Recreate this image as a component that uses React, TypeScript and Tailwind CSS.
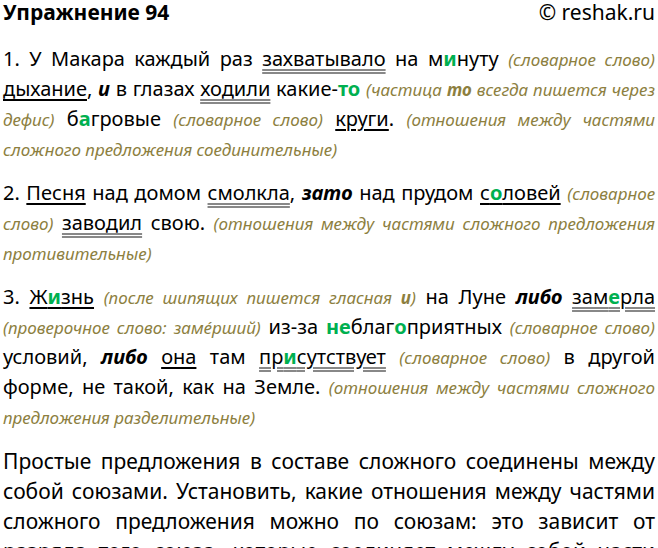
const C = ({ children }: { children: React.ReactNode }) => (
  <i className="text-[#8d7f3f] text-[17px]">{children}</i>
);
const S = ({ children }: { children: React.ReactNode }) => (
  <span className="underline decoration-black decoration-[1.5px] underline-offset-[3px]">{children}</span>
);
const P = ({ children }: { children: React.ReactNode }) => (
  <span className="underline decoration-double decoration-[#888] underline-offset-[3px]">{children}</span>
);
const G = ({ children }: { children: React.ReactNode }) => (
  <b className="text-[#00b050]">{children}</b>
);

export default function App() {
  return (
    <div className="w-[658px] h-[548px] bg-white text-black px-[3px] overflow-hidden font-['Liberation_Serif','Times_New_Roman',serif]">
      <div className="flex justify-between items-baseline text-[21px] leading-[24px]">
        <b>Упражнение 94</b>
        <span>© reshak.ru</span>
      </div>
      <p className="mt-[20px] text-[20px] leading-[29px] text-justify">
        1. У Макара каждый раз <P>захватывало</P> на м<G>и</G>нуту <C>(словарное слово)</C> <S>дыхание</S>, <b><i>и</i></b> в глазах <P>ходили</P> какие-<G>то</G> <C>(частица <b>то</b> всегда пишется через дефис)</C> б<G>а</G>гровые <C>(словарное слово)</C> <S>круги</S>. <C>(отношения между частями сложного предложения соединительные)</C>
      </p>
      <p className="mt-[14px] text-[20px] leading-[29px] text-justify">
        2. <S>Песня</S> над домом <P>смолкла</P>, <b><i>зато</i></b> над прудом <S>с<G>о</G>ловей</S> <C>(словарное слово)</C> <P>заводил</P> свою. <C>(отношения между частями сложного предложения противительные)</C>
      </p>
      <p className="mt-[14px] text-[20px] leading-[29px] text-justify">
        3. <S>Ж<G>и</G>знь</S> <C>(после шипящих пишется гласная <b>и</b>)</C> на Луне <b><i>либо</i></b> <P>зам<G>е</G>рла</P> <C>(проверочное слово: замéрший)</C> из-за <G>не</G>благ<G>о</G>приятных <C>(словарное слово)</C> условий, <b><i>либо</i></b> <S>она</S> там <P>пр<G>и</G>сутствует</P> <C>(словарное слово)</C> в другой форме, не такой, как на Земле. <C>(отношения между частями сложного предложения разделительные)</C>
      </p>
      <p className="mt-[14px] text-[21px] leading-[30px] text-justify">
        Простые предложения в составе сложного соединены между собой союзами. Установить, какие отношения между частями сложного предложения можно по союзам: это зависит от разряда того союза, которые соединяет между собой части сложного предложения.
      </p>
    </div>
  );
}
